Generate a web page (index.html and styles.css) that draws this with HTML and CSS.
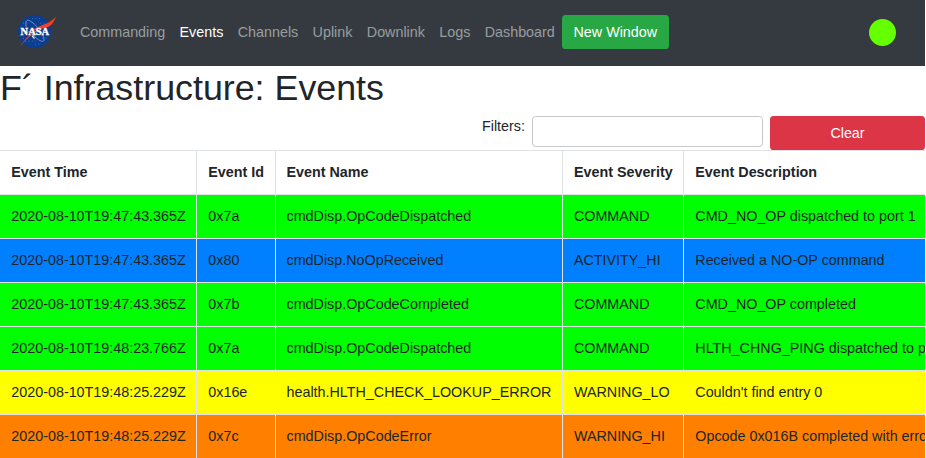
FILE: index.html
```html
<!DOCTYPE html>
<html lang="en">
<head>
<meta charset="utf-8">
<title>F´ Infrastructure: Events</title>
<link rel="stylesheet" href="styles.css">
</head>
<body>
<nav class="navbar">
  <svg class="logo" viewBox="0 0 42 36" role="img" aria-label="NASA">
    <circle cx="18.600" cy="17.500" r="16.500" fill="#0b3d91"/>
    <g fill="none" stroke="#b4c5e2" stroke-width=".6">
      <path d="M10.300 13.100C9 7.600 10.500 5.100 13.500 6.600C20 10.100 28 20.100 28 25.600C28 29.600 21 26.100 15.500 19.100"/>
      <path stroke-opacity=".6" stroke-dasharray="1 2.500" d="M16 4.600h10M7 9.100h7M24 9.100h7M7 24.600h7M9 27.100h11M19 30.100h7M26 24.100h7"/>
    </g>
    <path fill="#fc3d21" d="M.2 22.800C10 19 16.500 15 24.500 11.900C32 9.300 36 7.300 40 2.600C37 10.600 33.500 13.400 28 14.100C19 17.100 11 24.100 4.200 32.700C9 24.600 16 18.600 23.500 14.600C14 17.800 7 21.200 .2 22.800Z"/>
    <text class="logo-text" x="4.600" y="20.700" textLength="28.500" lengthAdjust="spacingAndGlyphs">NASA</text>
    <path d="m16 21.600 2.500 3" stroke="#fff" stroke-width="1.200"/>
  </svg>
  <div class="links">
    <a>Commanding</a><a class="active">Events</a><a>Channels</a><a>Uplink</a><a>Downlink</a><a>Logs</a><a>Dashboard</a>
  </div>
  <button class="btn new-window">New Window</button>
  <span class="status"></span>
</nav>
<h1>F´ Infrastructure: Events</h1>
<div class="filters">
  <label for="filter">Filters:</label>
  <input id="filter" type="text">
  <button class="btn clear">Clear</button>
</div>
<table>
  <colgroup><col class="time"><col class="id"><col class="name"><col class="severity"><col></colgroup>
  <thead>
    <tr><th>Event Time</th><th>Event Id</th><th>Event Name</th><th>Event Severity</th><th>Event Description</th></tr>
  </thead>
  <tbody>
    <tr class="command"><td>2020-08-10T19:47:43.365Z</td><td>0x7a</td><td>cmdDisp.OpCodeDispatched</td><td>COMMAND</td><td>CMD_NO_OP dispatched to port 1</td></tr>
    <tr class="activity"><td>2020-08-10T19:47:43.365Z</td><td>0x80</td><td>cmdDisp.NoOpReceived</td><td>ACTIVITY_HI</td><td>Received a NO-OP command</td></tr>
    <tr class="command"><td>2020-08-10T19:47:43.365Z</td><td>0x7b</td><td>cmdDisp.OpCodeCompleted</td><td>COMMAND</td><td>CMD_NO_OP completed</td></tr>
    <tr class="command"><td>2020-08-10T19:48:23.766Z</td><td>0x7a</td><td>cmdDisp.OpCodeDispatched</td><td>COMMAND</td><td>HLTH_CHNG_PING dispatched to port 1</td></tr>
    <tr class="warning-lo"><td>2020-08-10T19:48:25.229Z</td><td>0x16e</td><td>health.HLTH_CHECK_LOOKUP_ERROR</td><td>WARNING_LO</td><td>Couldn't find entry 0</td></tr>
    <tr class="warning-hi"><td>2020-08-10T19:48:25.229Z</td><td>0x7c</td><td>cmdDisp.OpCodeError</td><td>WARNING_HI</td><td>Opcode 0x016B completed with error</td></tr>
  </tbody>
</table>
</body>
</html>
```
FILE: styles.css
```css
* { box-sizing: border-box; }
body {
  margin: 0;
  height: 458px;
  overflow: hidden;
  background: #fff;
  color: #212529;
  font: 14.33px/21.6px "Liberation Sans", Arial, sans-serif;
}
.navbar {
  display: flex;
  align-items: center;
  width: 925px;
  height: 66px;
  padding: 0 29px 2px 16px;
  background: #343a40;
}
.logo { width: 42px; height: 36px; flex: none; overflow: visible; }
.logo-text { font: bold 9.500px "Liberation Serif", serif; fill: #fff; stroke: #fff; stroke-width: .3px; }
.links {
  display: flex;
  gap: 14.35px;
  margin-left: 22px;
  padding-top: 1px;
  color: rgba(255, 255, 255, .5);
}
.links .active { color: #fff; }
.btn {
  height: 34px;
  padding: 1px 0 0;
  border: 0;
  border-radius: 3.6px;
  color: #fff;
  font: inherit;
}
.new-window { width: 107px; margin-left: 7px; background: #28a745; }
.status {
  width: 27px;
  height: 27px;
  margin-left: auto;
  border-radius: 50%;
  background: #6f0;
}
h1 {
  margin: 0;
  height: 50px;
  padding-top: 1px;
  font-size: 35.8px;
  font-weight: 500;
  line-height: 43px;
}
.filters {
  display: flex;
  justify-content: flex-end;
  align-items: flex-start;
  height: 34px;
  padding-right: 1px;
}
.filters label { margin-right: 7px; }
.filters input {
  width: 231px;
  height: 31px;
  margin: 0 7px 0 0;
  border: 1px solid #c8c8c8;
  border-radius: 3.6px;
  background: #fff;
}
.clear { width: 155px; background: #dc3545; }
table {
  width: 925px;
  table-layout: fixed;
  border-collapse: separate;
  border-spacing: 0;
}
.time { width: 197px; }
.id { width: 79px; }
.name { width: 287px; }
.severity { width: 121px; }
th, td {
  height: 44px;
  padding: 0 0 0 11.3px;
  border-top: 1px solid #dee2e6;
  border-right: 1px solid #dee2e6;
  text-align: left;
  white-space: nowrap;
  overflow: hidden;
}
th:nth-child(3), td:nth-child(3) { padding-left: 10.5px; }
th:nth-child(4), td:nth-child(4) { padding-left: 10.9px; }
th:last-child, td:last-child { border-right: 0; }
.command { background: #0f0; }
.activity { background: #0080ff; }
.warning-lo { background: #ff0; }
.warning-hi { background: #ff8000; }
```
